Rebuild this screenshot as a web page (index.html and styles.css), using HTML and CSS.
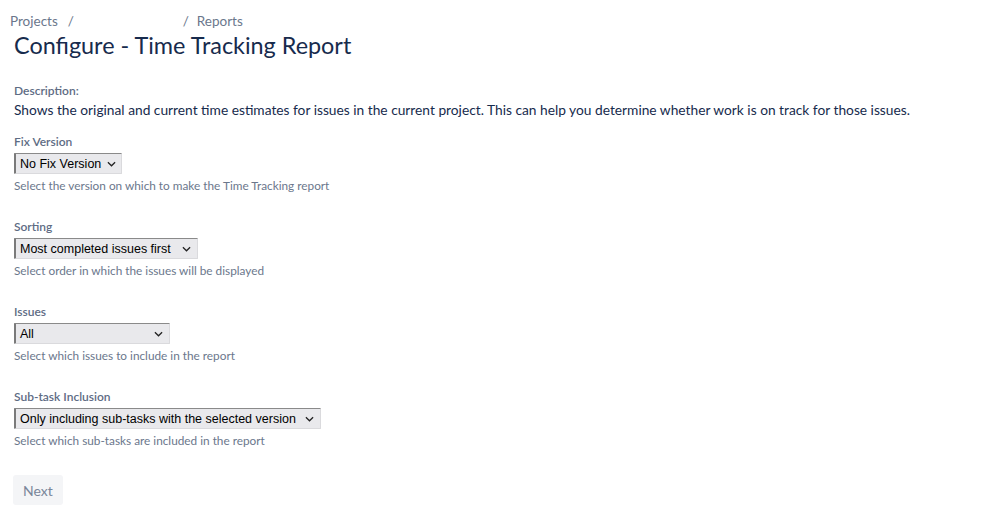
FILE: index.html
```html
<!DOCTYPE html>
<html>
<head>
<meta charset="utf-8">
<link rel="stylesheet" href="styles.css">
</head>
<body>
<div class="page">
  <nav class="crumbs">
    <span class="crumb">Projects</span><span class="sep">/</span><span class="crumb blank"></span><span class="sep">/</span><span class="crumb">Reports</span>
  </nav>
  <h1 class="title">Configure - Time Tracking Report</h1>

  <div class="desc">
    <div class="label">Description:</div>
    <p class="desc-text">Shows the original and current time estimates for issues in the current project. This can help you determine whether work is on track for those issues.</p>
  </div>

  <div class="field">
    <div class="label">Fix Version</div>
    <div class="select w1"><span class="val">No Fix Version</span><svg class="chev" viewBox="0 0 10 6" width="9" height="6"><path d="M1 1l4 4 4-4" fill="none" stroke="#222" stroke-width="1.4"/></svg></div>
    <div class="help">Select the version on which to make the Time Tracking report</div>
  </div>

  <div class="field">
    <div class="label">Sorting</div>
    <div class="select w2"><span class="val">Most completed issues first</span><svg class="chev" viewBox="0 0 10 6" width="9" height="6"><path d="M1 1l4 4 4-4" fill="none" stroke="#222" stroke-width="1.4"/></svg></div>
    <div class="help">Select order in which the issues will be displayed</div>
  </div>

  <div class="field">
    <div class="label">Issues</div>
    <div class="select w3"><span class="val">All</span><svg class="chev" viewBox="0 0 10 6" width="9" height="6"><path d="M1 1l4 4 4-4" fill="none" stroke="#222" stroke-width="1.4"/></svg></div>
    <div class="help">Select which issues to include in the report</div>
  </div>

  <div class="field">
    <div class="label">Sub-task Inclusion</div>
    <div class="select w4"><span class="val">Only including sub-tasks with the selected version</span><svg class="chev" viewBox="0 0 10 6" width="9" height="6"><path d="M1 1l4 4 4-4" fill="none" stroke="#222" stroke-width="1.4"/></svg></div>
    <div class="help">Select which sub-tasks are included in the report</div>
  </div>

  <div class="actions">
    <button class="btn">Next</button>
  </div>
</div>
</body>
</html>
```
FILE: styles.css
```css
* { box-sizing: border-box; }
html, body { margin: 0; padding: 0; background: #fff; }
body { font-family: Lato, "Open Sans", sans-serif; color: #172b4d; }
.page { padding: 12px 14px 0 14px; display: flex; flex-direction: column; }
.crumbs { display: flex; align-items: center; font-size: 13.5px; color: #6b778c; height: 18px; margin-left: -4px; }
.sep { margin: 0 0 0 10px; width: 14px; }
.crumb.blank { width: 91px; }
.title { font-weight: 400; font-size: 23.4px; line-height: 30px; margin: 0; color: #172b4d; }
.desc { margin-top: 23px; }
.label { font-size: 12px; line-height: 16px; color: #5e6c84; font-weight: 600; }
.desc-text { margin: 1px 0 0 0; font-size: 13.75px; line-height: 20px; color: #172b4d; }
.field { margin-top: 14px; display: flex; flex-direction: column; align-items: flex-start; height: 73px; }
.field + .field { margin-top: 12px; }
.select { margin-top: 3px; height: 21px; display: flex; align-items: center; justify-content: space-between; background: #e9e9ec; border: 1px solid #dadadd; border-top-color: #8a8a8a; border-left: 2px solid #7a7a7a; padding: 0 6px 0 4px; font-family: "Liberation Sans", Arial, sans-serif; font-size: 12.5px; color: #000; border-radius: 1px; white-space: nowrap; }
.w1 { width: 108px; }
.w2 { width: 184px; }
.w3 { width: 156px; }
.w4 { width: 307px; }
.chev { flex: none; margin-left: 6px; }
.help { margin-top: 4px; font-size: 11.8px; line-height: 16px; color: #6b778c; }
.actions { margin-top: 13px; }
.btn { font-family: inherit; font-size: 14px; color: #7a869a; background: #f4f5f7; border: none; border-radius: 3px; height: 30px; padding: 0 10px; margin-left: -1px; }
```
